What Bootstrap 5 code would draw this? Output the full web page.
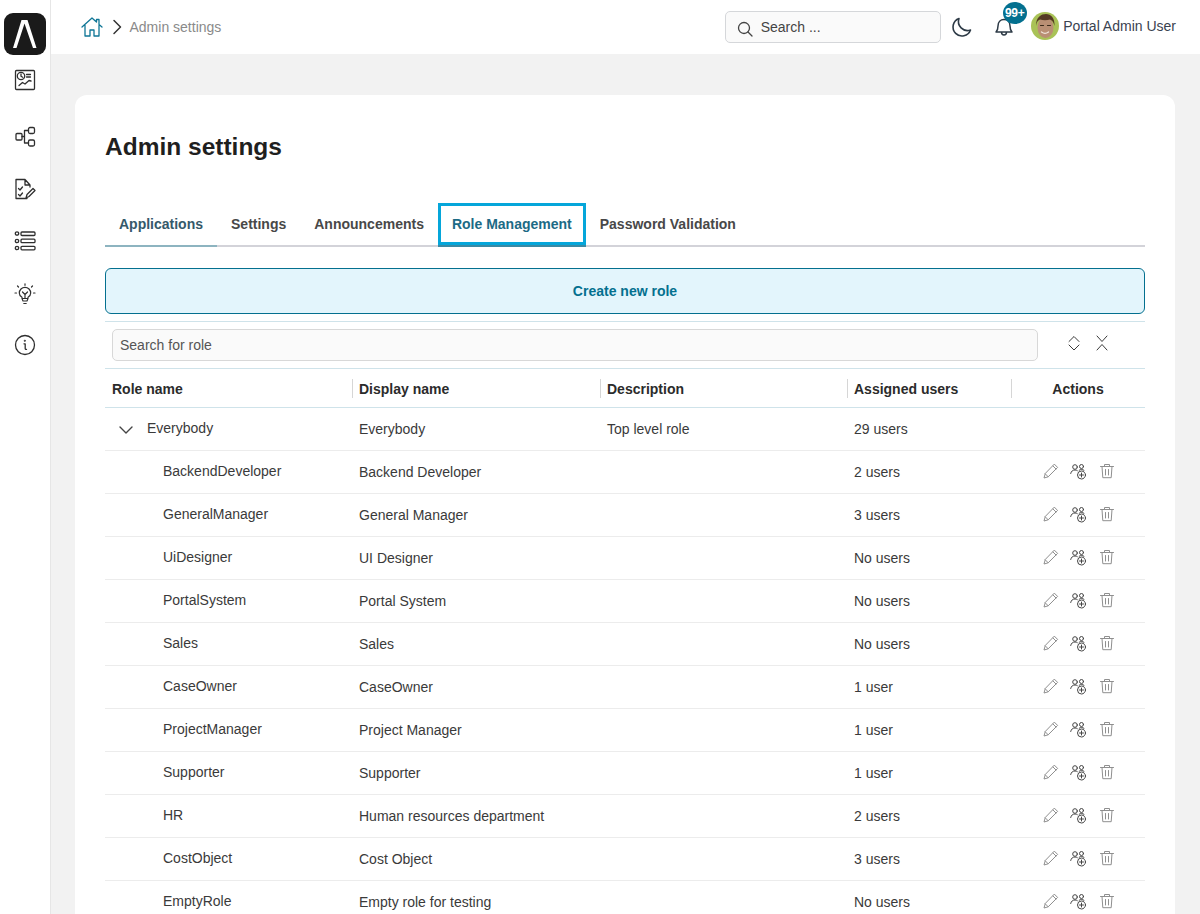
<!DOCTYPE html>
<html lang="en"><head><meta charset="utf-8"><title>Admin settings</title>
<link href="https://cdn.jsdelivr.net/npm/bootstrap@5.3.0/dist/css/bootstrap.min.css" rel="stylesheet">
<style>
html,body{height:914px;overflow:hidden}
body{font-family:"Liberation Sans",Arial,sans-serif;font-size:14px;color:#333;background:#f2f2f2}
svg{display:block;fill:none;stroke:currentColor;stroke-linecap:round;stroke-linejoin:round}
.side-rail{width:51px;height:914px;flex:none;background:#fff;border-right:1px solid #e6e6e6;padding-top:13px}
.logo-box{width:42px;height:42px;border-radius:9px;background:#1a1a1a;color:#fff;margin-left:4px}
.rail-icon{color:#2f2f2f;margin-left:14px}
.rail-i1{margin-top:14px}.rail-i2{margin-top:35px}.rail-i3,.rail-i4,.rail-i6{margin-top:30px}.rail-i5{margin-top:31px}.rail-i6{margin-top:29px}
.top-strip{height:54px;background:#fff;padding:0 24px 0 30px}
.crumb-text{color:#8a8a8a;margin-left:6.5px}
.home-ic{color:#0f7696}
.find-box{width:216px;height:32px;border:1px solid #d5d7da;border-radius:5px;background:#fafafa;padding-left:11px;gap:7px;color:#444;margin-right:10px}
.moon-ic{color:#2d3a46;margin-right:20px}
.bell-wrap{width:22px;height:24px;color:#2d3a46;margin-right:16px}
.bell-badge{position:absolute;top:-13px;left:10px;width:24px;height:22px;border-radius:50%;background:#04708f;color:#fff;font-size:12px;font-weight:700;line-height:22px;text-align:center;letter-spacing:-.3px}
.user-face{flex:none;stroke:none;position:relative;top:-1px}
.user-name{color:#3a4250;margin-left:4.5px;position:relative;top:-1px}
.sheet{margin:41px 25px 0 24px;background:#fff;border-radius:12px 12px 0 0;padding:30px;height:900px}
.page-title{font-size:24.5px;font-weight:700;color:#1f1f1f;line-height:44px;margin:0 0 34px}
.tab-row{border-bottom:2px solid #d3d3d9;height:44px}
.tab-item{padding:0 14px;height:44px;line-height:42px;font-weight:700;color:#484848}
.tab-on{color:#35596a;border-bottom:2px solid #8db4c0}
.tab-focus{color:#1c6a85;border-bottom:2px solid #3a8aa5;box-shadow:inset 0 0 0 3px #05a6da}
.new-role{display:block;width:100%;height:46px;margin-top:21px;border:1px solid #04708f;border-radius:6px;background:#e3f5fc;color:#04708f;font-weight:700;font-size:14px}
.role-tools{margin-top:7px;height:48px;border-top:1px solid #cfe3ea;border-bottom:1px solid #cfe3ea;padding:7px 0 0 7px}
.role-find{width:926px;height:32px;border:1px solid #d8d8d8;border-radius:5px;background:#fafafa;color:#555;padding-left:7px;line-height:30px}
.tool-ic{color:#3a3a3a;margin-top:6px}
.role-table{table-layout:fixed;width:1040px;border-collapse:collapse}
.role-table th{height:38px;border-bottom:1px solid #cfe3ea;padding:3px 0 0 7px;font-weight:700;color:#2b2b2b;position:relative}
.role-table th+th::before{content:"";position:absolute;left:0;top:10px;height:19px;border-left:1px solid #d6d6d6}
.role-table td{height:43px;border-bottom:1px solid #ececec;padding:2px 0 0 7px;vertical-align:middle;color:#3a3a3a}
.role-table th.act-col{text-align:center;padding:3px 0 0}
.nudge-up{position:relative;top:-1px;display:block}
.kid-name{padding-left:58px!important}
.root-name{padding-left:14px!important}
.act-ics{justify-content:center;position:relative;top:-1px;left:-3px}
.ic-add{margin:0 12px 0 11px}
.ic-edit,.ic-bin{color:#8f8f8f}
.ic-add{color:#454545}
</style></head>
<body>
<svg width="0" height="0" style="position:absolute">
<symbol id="i-edit" viewBox="0 0 16 16"><path d="M11.6 1.4l3 3-9.4 9.4-4.2 1.2 1.200-4.200zM10 3l3 3M2.200 10.800l3 3"/></symbol>
<symbol id="i-add" viewBox="0 0 17 17"><circle cx="5" cy="4" r="2.300"/><path d="M.7 10.500c.5-2.300 2-3.500 4.300-3.500 1 0 1.700.2 2.300.6"/><circle cx="11.500" cy="3.500" r="2"/><path d="M9.200 7.200c.7-.5 1.500-.7 2.300-.7 1 0 1.800.3 2.500.8"/><circle cx="11.500" cy="12" r="4"/><path d="M11.500 10v4M9.500 12h4"/></symbol>
<symbol id="i-bin" viewBox="0 0 16 16"><path d="M1.500 3.500h13M5.500 3.500V1.500h5v2M3 3.500l.8 11.200h8.400l.8-11.200M6.500 6.500v5.500M9.500 6.500v5.500"/></symbol>
</svg>
<div class="d-flex">
<nav class="side-rail">
<div class="logo-box"><svg width="42" height="42" viewBox="0 0 42 42" style="stroke:none;fill:#fff"><polygon points="9,35 17.500,7 23.500,7 32.500,35 29,35 20.500,10.500 12.500,35"/></svg></div>
<svg class="rail-icon rail-i1" width="22" height="22" viewBox="0 0 22 22" stroke-width="1.300"><rect x="1.500" y="1.500" width="19" height="19" rx="1"/><circle cx="7" cy="7" r="3.700"/><path d="M7 5v2.200l1.700 1M12.500 5.500h4M12.500 8h4M5 16.500l3.500-3 2.500 1.500 4-3.500 2 .5"/></svg>
<svg class="rail-icon rail-i2" width="22" height="22" viewBox="0 0 22 22" stroke-width="1.300"><rect x="2" y="7.500" width="6" height="6.500" rx="1"/><rect x="14.500" y="1.500" width="6" height="6" rx="1.500"/><rect x="14.500" y="14" width="6" height="6" rx="1.500"/><path d="M8 10.500h2.500V4.500h4M10.500 10.500V17h4"/></svg>
<svg class="rail-icon rail-i3" width="22" height="22" viewBox="0 0 22 22" stroke-width="1.300"><path d="M13 20.500H2v-19h9l5 5.500v2M11 1.500V7h5M4.500 10.500l1.500 1.500 2.500-3M4.500 16.500l1.500 1.500 2.500-3M12 20l1-3.500 6-6 2 2-6 6z"/></svg>
<svg class="rail-icon rail-i4" width="22" height="22" viewBox="0 0 22 22" stroke-width="1.300"><circle cx="3" cy="3.500" r="1.700"/><circle cx="3" cy="11" r="1.700"/><circle cx="3" cy="18" r="1.700"/><rect x="7" y="2" width="14" height="3.500" rx="1"/><rect x="7" y="9.200" width="14" height="3.500" rx="1"/><rect x="7" y="16.300" width="14" height="3.500" rx="1"/></svg>
<svg class="rail-icon rail-i5" width="22" height="22" viewBox="0 0 22 22" stroke-width="1.200"><path d="M8 15.500v-1.200c-1.500-.9-2.700-2.200-2.700-4.300a5.700 5.700 0 0 1 11.400 0c0 2.100-1.200 3.400-2.700 4.300v1.200zM8 15.500l1 2.500h4l1-2.500M9.800 20.500h2.400M8.500 9l2.500 2.500L13.500 9M11 11.500v4M11 .8v1.500M3.500 3l1 1M18.500 3l-1 1M1 10h1.500M19.500 10H21"/></svg>
<svg class="rail-icon rail-i6" width="22" height="22" viewBox="0 0 22 22" stroke-width="1.300"><circle cx="11" cy="11" r="9.500"/><path d="M10 9.800h1.200v4.700c0 .7.400 1 1.300.8"/><circle cx="10.800" cy="6.700" r=".4"/></svg>
</nav>
<div class="flex-grow-1">
<header class="top-strip d-flex align-items-center">
<svg class="home-ic" width="22" height="20" viewBox="0 0 22 20" stroke-width="1.300"><path d="M1 10L11 1l4.500 4V2.500h2.500v5L21 10M4 8.500V19h5v-6h4v6h5V8.500"/></svg>
<svg class="ms-2" width="12" height="16" viewBox="0 0 12 16" stroke-width="1.500" style="color:#333"><path d="M3 1.500L9.500 8 3 14.500"/></svg>
<span class="crumb-text">Admin settings</span>
<div class="ms-auto find-box d-flex align-items-center"><svg width="16" height="16" viewBox="0 0 16 16" stroke-width="1.300" style="margin-top:3px"><circle cx="7" cy="7" r="5.500"/><path d="M11 11l4 4"/></svg><span style="margin-left:1px">Search ...</span></div>
<svg class="moon-ic" width="22" height="22" viewBox="0 0 22 22" stroke-width="1.600"><path d="M8 2.500a9 9 0 1 0 11.500 11.500A9 9 0 0 1 8 2.500z"/></svg>
<div class="bell-wrap position-relative"><svg width="22" height="22" viewBox="0 0 22 22" stroke-width="1.500"><path d="M3 17c1.500-1.500 2-3 2-6 0-4 2.500-6.500 6-6.500S17 7 17 11c0 3 .5 4.500 2 6zM8.500 17c0 2 1 3 2.500 3s2.500-1 2.500-3"/></svg><span class="bell-badge">99+</span></div>
<svg class="user-face" width="28" height="28" viewBox="0 0 28 28"><circle cx="14" cy="14" r="14" fill="#a9c257"/><ellipse cx="14.500" cy="15.500" rx="8" ry="10.500" fill="#b98f74"/><path d="M5 14C5 5 10 2 15 2s9 4 8.500 12c-1-4-2-5.500-4.500-6.500-3 1-7 1-10 0-2.500 1-3.500 3-4 6.500z" fill="#553a24"/><path d="M9.500 13.500h3M16.500 13.500h3" stroke="#3a2a1a" stroke-width="1.200"/><path d="M10.500 20c2 1.500 5 1.500 7 0" stroke="#f0e4d8" stroke-width="1.300" fill="none"/></svg>
<span class="user-name">Portal Admin User</span>
</header>
<main class="sheet">
<h1 class="page-title">Admin settings</h1>
<div class="tab-row d-flex">
<div class="tab-item tab-on">Applications</div>
<div class="tab-item">Settings</div>
<div class="tab-item">Announcements</div>
<div class="tab-item tab-focus">Role Management</div>
<div class="tab-item">Password Validation</div>
</div>
<button class="new-role" type="button">Create new role</button>
<div class="role-tools d-flex">
<div class="role-find">Search for role</div>
<svg class="tool-ic" style="margin-left:28px" width="16" height="16" viewBox="0 0 16 16" stroke-width="1"><path d="M3 6.500L8 1.500l5 5M3 10l5 5 5-5"/></svg>
<svg class="tool-ic" style="margin-left:12px" width="16" height="16" viewBox="0 0 16 16" stroke-width="1"><path d="M3 1l5 5.500L13 1M3 15l5-5.500L13 15"/></svg>
</div>
<table class="role-table">
<colgroup><col style="width:247px"><col style="width:248px"><col style="width:247px"><col style="width:164px"><col style="width:134px"></colgroup>
<thead><tr><th>Role name</th><th>Display name</th><th>Description</th><th>Assigned users</th><th class="act-col">Actions</th></tr></thead>
<tbody id="rows">
<tr><td class="root-name"><span class="nudge-up d-flex align-items-center"><svg width="14" height="14" viewBox="0 0 14 14" stroke-width="1.400" style="margin-right:14px;margin-top:3px;color:#444"><path d="M1 4l6 6 6-6"/></svg>Everybody</span></td><td>Everybody</td><td>Top level role</td><td>29 users</td><td></td></tr>
</tbody></table>
</main>
</div></div>
<script>
const data=[["BackendDeveloper","Backend Developer","2 users"],["GeneralManager","General Manager","3 users"],["UiDesigner","UI Designer","No users"],["PortalSystem","Portal System","No users"],["Sales","Sales","No users"],["CaseOwner","CaseOwner","1 user"],["ProjectManager","Project Manager","1 user"],["Supporter","Supporter","1 user"],["HR","Human resources department","2 users"],["CostObject","Cost Object","3 users"],["EmptyRole","Empty role for testing","No users"]];
const act='<div class="act-ics d-flex"><svg class="ic-edit" width="16" height="16" stroke-width="1"><use href="#i-edit"/></svg><svg class="ic-add" width="17" height="17" stroke-width="1"><use href="#i-add"/></svg><svg class="ic-bin" width="16" height="16" stroke-width="1"><use href="#i-bin"/></svg></div>';
document.getElementById('rows').insertAdjacentHTML('beforeend',data.map(d=>`<tr><td class="kid-name"><span class="nudge-up">${d[0]}</span></td><td>${d[1]}</td><td></td><td>${d[2]}</td><td>${act}</td></tr>`).join(''));
</script>
<script src="https://cdn.jsdelivr.net/npm/bootstrap@5.3.0/dist/js/bootstrap.bundle.min.js"></script>
</body></html>
